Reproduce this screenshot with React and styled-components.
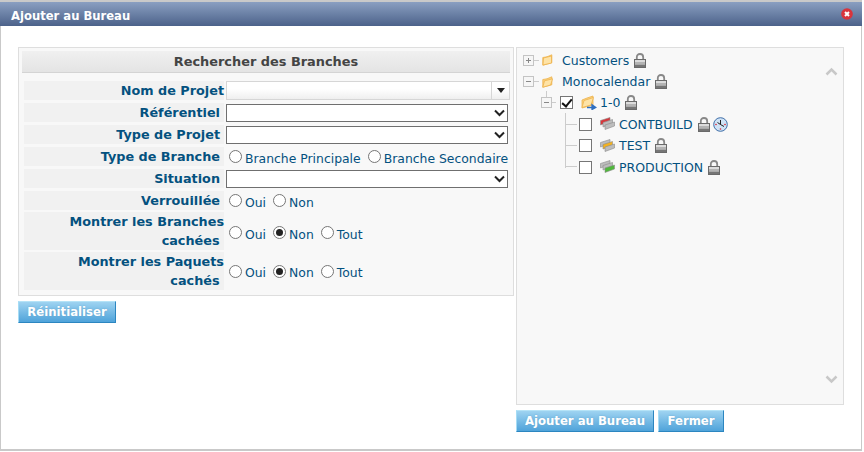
import React from "react";
import styled, { createGlobalStyle } from "styled-components";

const Global = createGlobalStyle`
  html, body { margin: 0; padding: 0; background: #fff; overflow: hidden; width: 864px; height: 452px; }
  body { font-family: "DejaVu Sans", Verdana, sans-serif; }
`;
const Dialog = styled.div`
  width: 862px; height: 451px; box-sizing: border-box;
  border-top: 2px solid #c9c9c9; border-left: 1px solid #c9c9c9;
  border-right: 1px solid #c9c9c9; border-bottom: 2px solid #c9c9c9;
  display: flex; flex-direction: column; background: #fff;
`;
const TitleBar = styled.div`
  height: 24px; flex: none; display: flex; align-items: center; justify-content: space-between;
  margin: 0 -1px; padding: 0 9px 0 11px;
  background: linear-gradient(#8a9fc1, #4c628a);
  color: #fff; font-size: 11.6px; font-weight: bold;
`;
const TitleText = styled.span`padding-top: 4px;`;
const CloseBtn = styled.svg`width: 12px; height: 12px; margin-top: -1px;`;
const Body = styled.div`
  flex: 1; display: flex; gap: 2px; padding: 21px 0 0 17px; align-items: flex-start;
`;
const LeftCol = styled.div`width: 496px; flex: none;`;
const RightCol = styled.div`width: 328px; flex: none;`;
const SearchPanel = styled.div`
  box-sizing: border-box; width: 496px; height: 249px; padding: 3px 3px 0;
  border: 1px solid #dedede; background: #f8f8f8;
`;
const PanelHead = styled.div`
  height: 22px; margin-bottom: 8px; box-sizing: border-box;
  background: linear-gradient(#f0f0f0, #e4e4e4); border-bottom: 1px solid #d4d4d4;
  text-align: center; line-height: 21px; font-size: 12.9px; font-weight: bold; color: #444;
`;
const Form = styled.div`
  display: grid; grid-template-columns: 200px 1fr; column-gap: 2px; row-gap: 3px; padding-left: 2px;
`;
const Label = styled.div`
  background: #f1f1f1; text-align: right; padding-right: ${p => p.$wide ? 0 : 4}px;
  height: ${p => p.$tall ? 38 : 19}px; line-height: 19px; ${p => p.$tall && "margin-top: -1px;"}
  font-size: 12.8px; font-weight: bold; color: #04517f;
`;
const Field = styled.div`
  display: flex; align-items: center; font-size: 12.4px; color: #04517f; height: ${p => p.$tall ? 38 : 19}px;
  ${p => p.$tall && "margin-top: -1px;"}
  padding-top: ${p => p.$drop ?? 0}px; box-sizing: border-box;
`;
const Combo = styled.div`
  box-sizing: border-box; width: 284px; height: 19px; display: flex; justify-content: flex-end;
  border: 1px solid #d6d6d6; background: linear-gradient(#fff 40%, #efefef);
`;
const ComboArrow = styled.div`
  width: 17px; border-left: 1px solid #d6d6d6; display: flex; align-items: center; justify-content: center;
  &::before { content: ""; border: 4px solid transparent; border-top: 5px solid #222; border-bottom: 0; }
`;
const Select = styled.select`
  appearance: none; width: 282px; height: 18px; box-sizing: border-box; border: 1px solid #6f6f6f; border-radius: 0;
  font-size: 13px; font-family: inherit; padding: 0; margin-top: 1px;
  background: #fff url("data:image/svg+xml,%3Csvg xmlns='http://www.w3.org/2000/svg' width='11' height='8'%3E%3Cpath d='M1 1.500l4.500 4.500 4.500-4.500' fill='none' stroke='%23222' stroke-width='2'/%3E%3C/svg%3E") no-repeat right 2px center;
`;
const RadioLabel = styled.label`
  display: inline-flex; align-items: center; gap: 3px; margin-right: 4px; padding-left: 3px;
  white-space: nowrap;
`;
const Radio = styled.input.attrs({ type: "radio" })`
  appearance: none; margin: -3px 0 0 0; width: 13px; height: 13px; border: 1px solid #767676; border-radius: 50%;
  background: #fff; box-sizing: border-box; display: grid; place-items: center;
  &:checked::before { content: ""; width: 7px; height: 7px; border-radius: 50%; background: #222; }
`;
const Button = styled.button`
  height: 22px; box-sizing: border-box; padding: 0; width: ${p => p.$w}px;
  border: 0; border-top: 1px solid #b5e3f7; border-left: 1px solid #a5dcf5;
  border-bottom: 1px solid #2c86c0; border-right: 1px solid #2c86c0;
  background: linear-gradient(#9ed3f1, #4fa3da);
  color: #fff; font: bold 11.7px "DejaVu Sans", sans-serif; text-shadow: 0 0 2px #6aa6cc;
`;
const ResetWrap = styled.div`margin-top: 5px;`;
const TreePanel = styled.div`
  position: relative; box-sizing: border-box; width: 328px; height: 358px;
  border: 1px solid #dedede; background: #f8f8f8; padding: 1.500px 0 0 6px;
`;
const ScrollMark = styled.svg`
  position: absolute; right: 5px; width: 13px; height: 9px;
  ${p => p.$top ? "top: 19px;" : "bottom: 20px;"}
`;
const TreeRow = styled.div`
  position: relative; display: flex; align-items: center; height: 21.4px; padding-left: ${p => p.$indent}px;
  font-size: 12.5px; color: #04517f;
  ${p => p.$stem && `&::before { content: ""; position: absolute; left: ${p.$indent - 14}px; top: ${p.$first ? -1 : -8}px; bottom: ${p.$last ? 10 : 0}px; border-left: 1px solid #ccc; }
  &::after { content: ""; position: absolute; left: ${p.$indent - 14}px; top: 10px; width: 12px; border-top: 1px solid #ccc; }`}
`;
const Expander = styled.span`
  box-sizing: border-box; width: 11px; height: 11px; border: 1px solid #c4c4c4; background: #f6f6f6; flex: none;
  position: relative; margin-right: 8px;
  &::before { content: ""; position: absolute; left: 2px; top: 4px; width: 5px; height: 1px; background: #888; }
  ${p => p.$plus && `&::after { content: ""; position: absolute; left: 4px; top: 2px; width: 1px; height: 5px; background: #888; }`}
`;
const Stub = styled.span`
  position: absolute; background: #ccc;
  left: ${p => p.$x}px; top: ${p => p.$y}px; width: ${p => p.$w}px; height: ${p => p.$h}px;
`;
const Check = styled.input.attrs({ type: "checkbox" })`
  appearance: none; margin: 0 8px 0 0; width: 13px; height: 13px; flex: none; box-sizing: border-box;
  border: 1px solid #767676; background: #fff; position: relative;
  &:checked::before {
    content: ""; position: absolute; left: 3px; top: 0; width: 4px; height: 8px;
    border: solid #111; border-width: 0 2px 2px 0; transform: rotate(40deg);
  }
`;
const Name = styled.span`margin: 0 5px 0 ${p => p.$m ?? 4}px; white-space: nowrap;`;
const IconSvg = styled.svg`flex: none; margin-right: ${p => p.$mr ?? 0}px;`;
const Actions = styled.div`display: flex; gap: 4px; margin-top: 5px;`;

const Lock = ({ mr }) => (
  <IconSvg width="12" height="15" viewBox="0 0 12 15" $mr={mr}>
    <path d="M2.800 7V4.300C2.800 2.100 4 1 6 1S9.200 2.100 9.200 4.300V7" fill="none" stroke="#888" strokeWidth="1.800" />
    <rect x=".5" y="6.500" width="11" height="8" fill="#a0a0a0" stroke="#6a6a6a" />
    <rect x="1" y="7" width="10" height="2" fill="#dcdcdc" />
    <rect x="1" y="9" width="10" height="2.500" fill="#b4b4b4" />
    <rect x="1" y="12" width="10" height="2" fill="#767676" />
  </IconSvg>
);
const Folder = ({ open }) => (
  <IconSvg width="11" height="12" viewBox="0 0 11 12">
    <path d="M.8 3.500L5 2.800 9.800.8v8L.8 11.200z" fill="#fbd27e" stroke="#edb24c" strokeWidth=".8" />
    <path d={open ? "M2.500 4.800L10.600 2.800 8.600 9 .8 11.200z" : "M1.500 4L9.500 2V9L1 11z"} fill="#fee3a6" stroke="#edb24c" strokeWidth=".8" />
  </IconSvg>
);
const FolderShared = () => (
  <IconSvg width="16" height="15" viewBox="0 0 16 15">
    <path d="M1 5l5-2 6-2v9l-11 3z" fill="#fbd27e" stroke="#edb24c" strokeWidth=".8" />
    <path d="M3 5.500l9.500-3L10 10 1 12.500z" fill="#fee3a6" stroke="#edb24c" strokeWidth=".8" />
    <path d="M6 12.500h6.500M11 9.800l3.800 2.700-3.800 2z" fill="#2f6fc0" stroke="#2f6fc0" strokeWidth="1.300" />
  </IconSvg>
);
const bar = (x, y) => `M${x} ${y + 3}L${x + 9.500} ${y}v4L${x} ${y + 7.500}z`;
const Stack = ({ top = "#bdbdbd", mid = "#bdbdbd", front = "#bdbdbd" }) => (
  <IconSvg width="15" height="14" viewBox="0 0 15 14">
    <path d={bar(.5, .5)} fill={top} stroke="#8c8c8c" strokeWidth=".6" />
    <path d={bar(3, 2.500)} fill={mid} stroke="#8c8c8c" strokeWidth=".6" />
    <path d={bar(5, 5)} fill={front} stroke="#8c8c8c" strokeWidth=".6" />
  </IconSvg>
);
const Clock = () => (
  <IconSvg width="15" height="15" viewBox="0 0 15 15">
    <circle cx="7.500" cy="7.500" r="6.800" fill="#cfe3f6" stroke="#3f6ea8" />
    <path d="M7.500 3v4.500l-3-2M7.500 7.500l3.500 2" fill="none" stroke="#222" strokeWidth="1" />
    <circle cx="7.500" cy="12" r=".8" fill="#d23" /><circle cx="12" cy="7.500" r=".8" fill="#d23" /><circle cx="3" cy="7.500" r=".8" fill="#d23" />
  </IconSvg>
);

export default function App() {
  return (
    <>
      <Global />
      <Dialog>
        <TitleBar>
          <TitleText>Ajouter au Bureau</TitleText>
          <CloseBtn viewBox="0 0 12 12">
            <circle cx="6" cy="6" r="5.800" fill="#d9343c" />
            <path d="M4 4l4 4M8 4l-4 4" stroke="#fff" strokeWidth="2" />
          </CloseBtn>
        </TitleBar>
        <Body>
          <LeftCol>
            <SearchPanel>
              <PanelHead>Rechercher des Branches</PanelHead>
              <Form>
                <Label $wide>Nom de Projet</Label>
                <Field><Combo><ComboArrow /></Combo></Field>
                <Label>Référentiel</Label>
                <Field><Select><option></option></Select></Field>
                <Label>Type de Projet</Label>
                <Field><Select><option></option></Select></Field>
                <Label>Type de Branche</Label>
                <Field $drop={3}>
                  <RadioLabel><Radio name="tb" />Branche Principale</RadioLabel>
                  <RadioLabel><Radio name="tb" />Branche Secondaire</RadioLabel>
                </Field>
                <Label>Situation</Label>
                <Field><Select><option></option></Select></Field>
                <Label>Verrouillée</Label>
                <Field $drop={3}>
                  <RadioLabel><Radio name="v" />Oui</RadioLabel>
                  <RadioLabel><Radio name="v" />Non</RadioLabel>
                </Field>
                <Label $tall $wide>Montrer les Branches<br />cachées&nbsp;</Label>
                <Field $tall $drop={6}>
                  <RadioLabel><Radio name="b" />Oui</RadioLabel>
                  <RadioLabel><Radio name="b" defaultChecked />Non</RadioLabel>
                  <RadioLabel><Radio name="b" />Tout</RadioLabel>
                </Field>
                <Label $tall $wide>Montrer les Paquets<br />cachés&nbsp;</Label>
                <Field $tall $drop={3}>
                  <RadioLabel><Radio name="p" />Oui</RadioLabel>
                  <RadioLabel><Radio name="p" defaultChecked />Non</RadioLabel>
                  <RadioLabel><Radio name="p" />Tout</RadioLabel>
                </Field>
              </Form>
            </SearchPanel>
            <ResetWrap><Button $w={98}>Réinitialiser</Button></ResetWrap>
          </LeftCol>
          <RightCol>
            <TreePanel>
              <ScrollMark $top viewBox="0 0 13 9"><path d="M1.500 7.500l5-5 5 5" fill="none" stroke="#c8c8c8" strokeWidth="2.500" /></ScrollMark>
              <ScrollMark viewBox="0 0 13 9"><path d="M1.500 1.500l5 5 5-5" fill="none" stroke="#c8c8c8" strokeWidth="2.500" /></ScrollMark>
              <TreeRow $indent={0}><Expander $plus /><Stub $x={11} $y={10} $w={5} $h={1} /><Folder /><Name $m={9}>Customers</Name><Lock /></TreeRow>
              <TreeRow $indent={0}><Expander /><Stub $x={11} $y={10} $w={5} $h={1} /><Folder open /><Name $m={9}>Monocalendar</Name><Lock /></TreeRow>
              <TreeRow $indent={18}><Stub $x={23} $y={-1} $w={1} $h={6} /><Expander /><Stub $x={29} $y={10} $w={4} $h={1} /><Check defaultChecked /><FolderShared /><Name $m={3}>1-0</Name><Lock /></TreeRow>
              <TreeRow $indent={56} $stem $first><Check /><Stack top="#d9363a" /><Name>CONTBUILD</Name><Lock mr={3} /><Clock /></TreeRow>
              <TreeRow $indent={56} $stem><Check /><Stack mid="#f5b21c" /><Name>TEST</Name><Lock /></TreeRow>
              <TreeRow $indent={56} $stem $last><Check /><Stack front="#4fb93a" /><Name>PRODUCTION</Name><Lock /></TreeRow>
            </TreePanel>
            <Actions>
              <Button $w={138}>Ajouter au Bureau</Button>
              <Button $w={66}>Fermer</Button>
            </Actions>
          </RightCol>
        </Body>
      </Dialog>
    </>
  );
}
